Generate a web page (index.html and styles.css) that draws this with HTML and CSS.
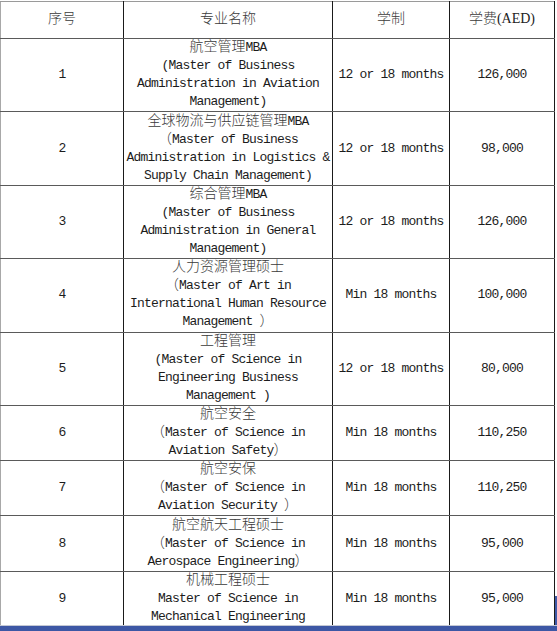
FILE: index.html
```html
<!DOCTYPE html>
<html lang="zh">
<head>
<meta charset="utf-8">
<link rel="stylesheet" href="styles.css">
</head>
<body>
<div class="page">
<table class="programs">
  <colgroup>
    <col class="c-no"><col class="c-name"><col class="c-len"><col class="c-fee">
  </colgroup>
  <thead>
    <tr>
      <th><span class="cn">序号</span></th>
      <th><span class="cn">专业名称</span></th>
      <th><span class="cn">学制</span></th>
      <th><span class="cn">学费</span><span class="serif">(AED)</span></th>
    </tr>
  </thead>
  <tbody>
    <tr class="r4">
      <td>1</td>
      <td><span class="cn">航空管理</span>MBA<br>(Master of Business<br>Administration in Aviation<br>Management)</td>
      <td>12 or 18 months</td>
      <td>126,000</td>
    </tr>
    <tr class="r4">
      <td>2</td>
      <td><span class="cn">全球物流与供应链管理</span>MBA<br><span class="cn">（</span>Master of Business<br>Administration in Logistics &amp;<br>Supply Chain Management)</td>
      <td>12 or 18 months</td>
      <td>98,000</td>
    </tr>
    <tr class="r4">
      <td>3</td>
      <td><span class="cn">综合管理</span>MBA<br>(Master of Business<br>Administration in General<br>Management)</td>
      <td>12 or 18 months</td>
      <td>126,000</td>
    </tr>
    <tr class="r4">
      <td>4</td>
      <td><span class="cn">人力资源管理硕士</span><br><span class="cn">（</span>Master of Art in<br>International Human Resource<br>Management <span class="cn">）</span></td>
      <td>Min 18 months</td>
      <td>100,000</td>
    </tr>
    <tr class="r4">
      <td>5</td>
      <td><span class="cn">工程管理</span><br>(Master of Science in<br>Engineering Business<br>Management )</td>
      <td>12 or 18 months</td>
      <td>80,000</td>
    </tr>
    <tr class="r3">
      <td>6</td>
      <td><span class="cn">航空安全</span><br><span class="cn">（</span>Master of Science in<br>Aviation Safety<span class="cn">）</span></td>
      <td>Min 18 months</td>
      <td>110,250</td>
    </tr>
    <tr class="r3">
      <td>7</td>
      <td><span class="cn">航空安保</span><br><span class="cn">（</span>Master of Science in<br>Aviation Security <span class="cn">）</span></td>
      <td>Min 18 months</td>
      <td>110,250</td>
    </tr>
    <tr class="r3">
      <td>8</td>
      <td><span class="cn">航空航天工程硕士</span><br><span class="cn">（</span>Master of Science in<br>Aerospace Engineering<span class="cn">）</span></td>
      <td>Min 18 months</td>
      <td>95,000</td>
    </tr>
    <tr class="r3">
      <td>9</td>
      <td><span class="cn">机械工程硕士</span><br>Master of Science in<br>Mechanical Engineering</td>
      <td>Min 18 months</td>
      <td>95,000</td>
    </tr>
  </tbody>
</table>
<div class="edge-line"></div>
<div class="bottom-bar"></div>
</div>
</body>
</html>
```

FILE: styles.css
```css
html, body {
  margin: 0;
  padding: 0;
  background: #ffffff;
}

.page {
  position: relative;
  width: 557px;
  height: 631px;
  padding-top: 1px;
  box-sizing: border-box;
  overflow: hidden;
}

.programs {
  border-collapse: collapse;
  table-layout: fixed;
  width: 554px;
  font-family: "Liberation Mono", "Noto Sans CJK SC", monospace;
  font-size: 13px;
  letter-spacing: -0.8px;
  line-height: 18px;
  color: #1c1c1c;
}

.c-no { width: 123px; }
.c-name { width: 209px; }
.c-len { width: 117px; }
.c-fee { width: 105px; }

.programs th,
.programs td {
  padding: 0;
  text-align: center;
  vertical-align: middle;
  white-space: nowrap;
  border-left: 1px solid #1a1a1a;
  border-right: 1px solid #1a1a1a;
  border-top: 1px solid #5a5a5a;
  border-bottom: 1px solid #5a5a5a;
}

.programs th:first-child,
.programs td:first-child {
  border-left-color: #a8a8a8;
}

.programs thead tr {
  height: 37px;
}

.programs thead th {
  font-weight: normal;
  border-top-color: #9a9a9a;
}

.programs tr.r4 {
  height: 73.4px;
}

.programs tr.r3 {
  height: 55.25px;
}

.cn {
  font-family: "Noto Sans CJK SC", sans-serif;
  font-size: 14px;
  font-weight: 300;
  letter-spacing: 0;
  line-height: 12px;
  color: #3a3a3a;
}

.serif {
  font-family: "Liberation Serif", serif;
  font-size: 14px;
  letter-spacing: 0;
  line-height: 12px;
  color: #222222;
}

.edge-line {
  position: absolute;
  left: 555px;
  top: 596px;
  width: 2px;
  height: 31px;
  background: #3f59a6;
}

.bottom-bar {
  position: absolute;
  left: 0;
  right: 0;
  bottom: 0;
  height: 5px;
  border-top: 1px solid #c4c8d4;
  background: #3d57a5;
}
```
